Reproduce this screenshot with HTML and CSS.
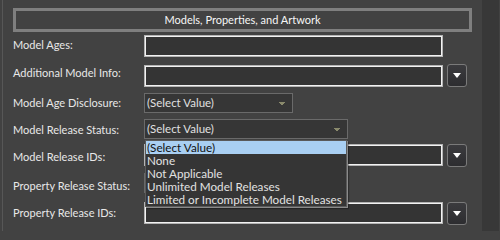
FILE: index.html
```html
<!DOCTYPE html>
<html>
<head>
<meta charset="utf-8">
<link rel="stylesheet" href="styles.css">
</head>
<body>
<div class="page">
  <div class="panel">
    <div class="header">Models, Properties, and Artwork</div>
    <div class="form">
      <div class="row r1">
        <div class="label">Model Ages:</div>
        <div class="input"></div>
      </div>
      <div class="row r2">
        <div class="label">Additional Model Info:</div>
        <div class="input shift"></div>
        <div class="btn"><svg width="8" height="5" viewBox="0 0 8 5"><path d="M0 0H8L4 5Z" fill="#fff"/></svg></div>
      </div>
      <div class="row r3">
        <div class="label">Model Age Disclosure:</div>
        <div class="select"><span>(Select Value)</span><svg class="arr" width="6" height="3" viewBox="0 0 6 3"><path d="M0 0H6V1H5V2H4V3H2V2H1V1H0Z" fill="#8a8a6c"/></svg></div>
      </div>
      <div class="row r4">
        <div class="label">Model Release Status:</div>
        <div class="select wide"><span>(Select Value)</span><svg class="arr" width="6" height="3" viewBox="0 0 6 3"><path d="M0 0H6V1H5V2H4V3H2V2H1V1H0Z" fill="#8a8a6c"/></svg></div>
      </div>
      <div class="row r5">
        <div class="label">Model Release IDs:</div>
        <div class="input"></div>
        <div class="btn"><svg width="8" height="5" viewBox="0 0 8 5"><path d="M0 0H8L4 5Z" fill="#fff"/></svg></div>
      </div>
      <div class="row r6">
        <div class="label">Property Release Status:</div>
        <div class="select wide"><span></span></div>
      </div>
      <div class="row r7">
        <div class="label">Property Release IDs:</div>
        <div class="input"></div>
        <div class="btn"><svg width="8" height="5" viewBox="0 0 8 5"><path d="M0 0H8L4 5Z" fill="#fff"/></svg></div>
      </div>
    </div>
    <ul class="list">
      <li class="sel">(Select Value)</li>
      <li>None</li>
      <li>Not Applicable</li>
      <li>Unlimited Model Releases</li>
      <li>Limited or Incomplete Model Releases</li>
    </ul>
  </div>
  <div class="strip"></div>
</div>
</body>
</html>
```
FILE: styles.css
```css
html, body {
  margin: 0;
  padding: 0;
  background: #424242;
  width: 500px;
  height: 231px;
  overflow: hidden;
}
.page {
  display: flex;
  width: 500px;
  height: 231px;
  font-family: Lato, "Noto Sans", sans-serif;
  font-size: 11px;
  color: #e8e8e8;
}
.panel {
  position: relative;
  width: 480px;
  margin-left: 2px;
  border-left: 1px solid #575757;
  padding-left: 10px;
  box-sizing: border-box;
}
.strip {
  width: 17px;
  background: #383838;
}
.header {
  margin-top: 8px;
  width: 459px;
  height: 24px;
  box-sizing: border-box;
  border: 3px solid #7f7f7f;
  text-align: center;
  line-height: 17px;
  color: #f6f6f6;
}
.form {
  margin-top: 3px;
  display: flex;
  flex-direction: column;
}
.row {
  display: flex;
  align-items: flex-start;
}
.r1 { height: 29px; }
.r2 { height: 29px; }
.r3 { height: 26px; }
.r4 { height: 25px; }
.r5 { height: 29px; }
.r6 { height: 29px; }
.r7 { height: 29px; }
.label {
  width: 131px;
  line-height: 16px;
  padding-top: 2px;
  white-space: nowrap;
}
.r2 .label { padding-top: 1px; }
.r3 .label { padding-top: 2px; }
.r4 .label { padding-top: 3px; }
.r5 .label { padding-top: 5px; }
.r6 .label { padding-top: 5px; }
.r7 .label { padding-top: 3px; }
.input {
  width: 299px;
  height: 22px;
  box-sizing: border-box;
  background: #343434;
  border: 1px solid #b4b4b4;
  box-shadow: inset 0 0 0 1px #f2f2f2;
}
.input.shift { margin-top: 1px; }
.btn {
  margin-left: 4px;
  width: 20px;
  height: 23px;
  box-sizing: border-box;
  border: 1px solid #7a7a7a;
  border-radius: 3px;
  background: linear-gradient(#3b3b3e, #2d2d30);
  display: flex;
  align-items: center;
  justify-content: center;
}
.select {
  width: 149px;
  height: 20px;
  box-sizing: border-box;
  background: #363636;
  border: 1px solid #6a6a6a;
  display: flex;
  align-items: center;
  padding-left: 2px;
  color: #e0e0e0;
  font-size: 11.5px;
}
.select.wide { width: 204px; }
.select span { flex: 1; line-height: 16px; }
.arr { margin-right: 7px; }
.list {
  position: absolute;
  left: 142px;
  top: 140px;
  width: 202px;
  margin: 0;
  padding: 0;
  list-style: none;
  background: #353535;
  border: 1px solid #5a5a5a;
  box-shadow: 1px 1px 0 #8a8a8a, 2px 2px 1px rgba(0,0,0,0.3);
  box-sizing: border-box;
  font-size: 11.7px;
}
.list li {
  height: 13px;
  line-height: 13px;
  padding-left: 1px;
  color: #e2e2e2;
  white-space: nowrap;
}
.list li.sel {
  background: #a9cff2;
  color: #111;
}
```
